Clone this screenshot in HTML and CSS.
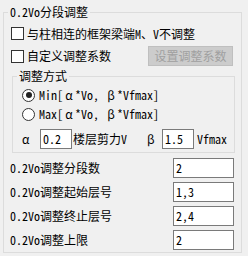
FILE: index.html
```html
<!DOCTYPE html>
<html lang="zh">
<head>
<meta charset="utf-8">
<link rel="stylesheet" href="styles.css">
</head>
<body>
<fieldset class="group outer">
  <legend class="title">0.2Vo分段调整</legend>
  <div class="cbrow first">
    <span class="cb"></span><span>与柱相连的框架梁端M、V不调整</span>
  </div>
  <div class="cbrow second">
    <span class="cb"></span><span>自定义调整系数</span>
    <span class="btn">设置调整系数</span>
  </div>
  <fieldset class="group inner">
    <legend class="title ititle">调整方式</legend>
    <div class="rrow r1">
      <span class="radio checked"></span><span class="formula">Min[<span class="fw">α</span>*Vo, <span class="fw">β</span>*Vfmax]</span>
    </div>
    <div class="rrow r2">
      <span class="radio"></span><span class="formula">Max[<span class="fw">α</span>*Vo, <span class="fw">β</span>*Vfmax]</span>
    </div>
    <div class="arow">
      <span class="alpha">α</span>
      <span class="inp small">0.2</span>
      <span class="shear">楼层剪力V</span>
      <span class="beta">β</span>
      <span class="inp small">1.5</span>
      <span class="vf">Vfmax</span>
    </div>
  </fieldset>
  <div class="frow f1"><span>0.2Vo调整分段数</span><span class="inp num">2</span></div>
  <div class="frow"><span>0.2Vo调整起始层号</span><span class="inp num">1,3</span></div>
  <div class="frow"><span>0.2Vo调整终止层号</span><span class="inp num">2,4</span></div>
  <div class="frow"><span>0.2Vo调整上限</span><span class="inp num">2</span></div>
</fieldset>
</body>
</html>
```
FILE: styles.css
```css
html, body {
  margin: 0;
  padding: 0;
  background: #f0f0f0;
}
body {
  font-family: "Noto Sans Mono CJK SC", "Noto Sans CJK SC", "Liberation Mono", monospace;
  font-size: 12px;
  font-weight: 300;
  line-height: 14px;
  color: #000;
  width: 248px;
  height: 256px;
  overflow: hidden;
}
.group {
  border: 1px solid #dcdcdc;
  margin: 0;
  padding: 0;
  min-width: 0;
  box-sizing: border-box;
}
.outer {
  margin: 5px 0 0 3px;
  width: 239px;
  height: 248px;
}
.title {
  padding: 0 2px;
  margin-left: 4px;
  line-height: 14px;
  height: 14px;
}
.cbrow {
  display: flex;
  align-items: center;
  gap: 3px;
  padding-left: 7px;
}
.cbrow.first {
  height: 17px;
  margin-top: 6px;
}
.cbrow.second {
  height: 20px;
  margin-top: 4px;
}
.cb {
  width: 13px;
  height: 13px;
  box-sizing: border-box;
  border: 1px solid #333;
  background: #fff;
  flex: none;
}
.btn {
  margin-left: auto;
  margin-right: 8px;
  width: 85px;
  height: 20px;
  box-sizing: border-box;
  border: 1px solid #bfbfbf;
  background: #cccccc;
  color: #a0a0a0;
  display: flex;
  align-items: center;
  justify-content: center;
}
.inner {
  margin: 3px 0 0 8px;
  width: 223px;
  padding-bottom: 3px;
}
.ititle {
  margin-left: 4px;
}
.rrow {
  display: flex;
  align-items: center;
  gap: 4px;
  height: 16px;
  padding-left: 9px;
}
.r1 { margin-top: 4px; }
.r2 { margin-top: 3px; }
.formula {
  white-space: pre;
}
.fw {
  display: inline-block;
  width: 12px;
  text-align: center;
}
.radio {
  width: 13px;
  height: 13px;
  box-sizing: border-box;
  border: 1px solid #333;
  border-radius: 50%;
  background: #fff;
  flex: none;
  display: flex;
  align-items: center;
  justify-content: center;
}
.radio.checked::after {
  content: "";
  width: 6px;
  height: 6px;
  border-radius: 50%;
  background: #222;
}
.arow {
  display: flex;
  align-items: center;
  height: 20px;
  margin-top: 7px;
  padding-left: 9px;
}
.alpha { width: 18px; flex: none; }
.shear { width: 74px; padding-left: 1px; flex: none; }
.beta { width: 15px; flex: none; }
.vf { margin-left: 3px; }
.inp {
  height: 20px;
  box-sizing: border-box;
  border: 1px solid #7a7a7a;
  background: #fff;
  padding-left: 2px;
  display: flex;
  align-items: center;
  flex: none;
}
.small { width: 32px; }
.frow {
  display: flex;
  align-items: center;
  height: 20px;
  padding-left: 6px;
  margin-top: 4px;
}
.frow.f1 { margin-top: 5px; }
.num {
  width: 61px;
  margin-left: auto;
  margin-right: 7px;
}
```
